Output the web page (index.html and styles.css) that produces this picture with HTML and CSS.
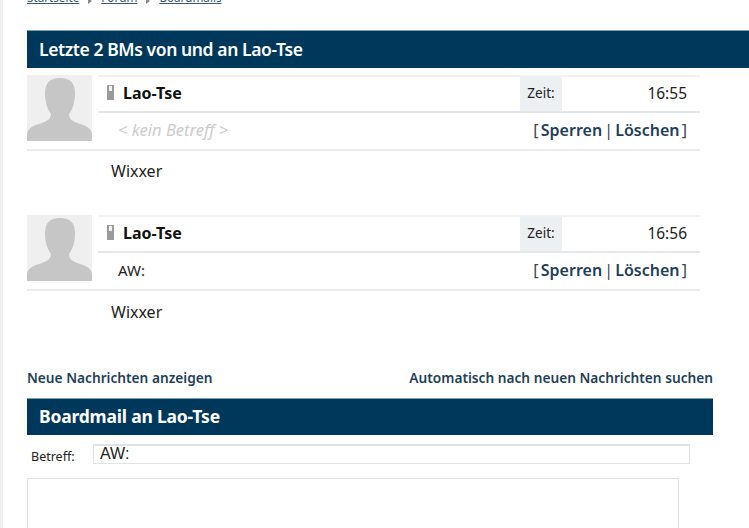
FILE: index.html
```html
<!DOCTYPE html>
<html lang="de">
<head>
    <meta charset="UTF-8">
    <meta name="viewport" content="width=device-width, initial-scale=1.0">
    <title>Boardmails</title>
    <link rel="stylesheet" href="styles.css">
</head>
<body>
    <div class="page">
        <div class="crumbs">
            <a href="#">Startseite</a>
            <span class="crumb-arrow"></span>
            <a href="#">Forum</a>
            <span class="crumb-arrow"></span>
            <a href="#">Boardmails</a>
        </div>

        <h2 class="title title-wide">Letzte 2 BMs von und an Lao-Tse</h2>

        <div class="message">
            <div class="msg-head">
                <svg class="avatar" viewBox="0 0 65 66"><rect width="65" height="66" fill="#efefef"/><path d="M0 66V60C0 54 5 51 12 49C20 46.500 24 44 24 39C20 34 18 26 18 18C18 8 23 3 33 3C43 3 48 8 48 18C48 26 46 34 42 39C42 44 45 46.500 53 49C60 51 65 54 65 60V66Z" fill="#c6c6c6"/></svg>
                <div class="msg-table">
                    <div class="row row-user">
                        <svg class="status" viewBox="0 0 7 15"><rect width="7" height="15" fill="#9b9b9b"/><rect x="2" y="1" width="3" height="5" fill="#f2f2f2"/></svg>
                        <span class="user">Lao-Tse</span>
                        <span class="time-label">Zeit:</span>
                        <span class="time">16:55</span>
                    </div>
                    <div class="row row-subject">
                        <span class="subject subject-empty">&lt; kein Betreff &gt;</span>
                        <span class="actions">[ <a href="#">Sperren</a> | <a href="#">Löschen</a> ]</span>
                    </div>
                </div>
            </div>
            <p class="msg-body">Wixxer</p>
        </div>

        <div class="message">
            <div class="msg-head">
                <svg class="avatar" viewBox="0 0 65 66"><rect width="65" height="66" fill="#efefef"/><path d="M0 66V60C0 54 5 51 12 49C20 46.500 24 44 24 39C20 34 18 26 18 18C18 8 23 3 33 3C43 3 48 8 48 18C48 26 46 34 42 39C42 44 45 46.500 53 49C60 51 65 54 65 60V66Z" fill="#c6c6c6"/></svg>
                <div class="msg-table">
                    <div class="row row-user">
                        <svg class="status" viewBox="0 0 7 15"><rect width="7" height="15" fill="#9b9b9b"/><rect x="2" y="1" width="3" height="5" fill="#f2f2f2"/></svg>
                        <span class="user">Lao-Tse</span>
                        <span class="time-label">Zeit:</span>
                        <span class="time">16:56</span>
                    </div>
                    <div class="row row-subject">
                        <span class="subject">AW:</span>
                        <span class="actions">[ <a href="#">Sperren</a> | <a href="#">Löschen</a> ]</span>
                    </div>
                </div>
            </div>
            <p class="msg-body">Wixxer</p>
        </div>

        <div class="links">
            <a href="#">Neue Nachrichten anzeigen</a>
            <a href="#">Automatisch nach neuen Nachrichten suchen</a>
        </div>

        <h2 class="title title-bold">Boardmail an Lao-Tse</h2>

        <form class="mail-form">
            <div class="subject-line">
                <label for="betreff">Betreff:</label>
                <input id="betreff" type="text" value="AW:">
            </div>
            <textarea></textarea>
        </form>
    </div>
</body>
</html>
```

FILE: styles.css
```css
html, body {
    height: 100%;
    overflow: hidden;
}
body {
    margin: 0;
    font-family: 'Noto Sans', 'Open Sans', sans-serif;
    font-size: 16px;
    color: #222;
    background-color: white;
    border-left: 3px solid #eee;
}
a {
    color: #1f3f58;
    text-decoration: none;
}
.page {
    width: 686px;
    margin-left: 24px;
}
.crumbs {
    display: flex;
    align-items: center;
    gap: 9px;
    height: 14px;
    margin-top: -10px;
    font-size: 11.700px;
}
.crumbs a {
    text-decoration: underline;
    color: #3a5a72;
}
.crumb-arrow {
    margin-top: 7px;
    border-left: 4px solid #888;
    border-top: 3px solid transparent;
    border-bottom: 3px solid transparent;
}
.title {
    margin: 0;
    height: 37px;
    line-height: 35px;
    padding-left: 12px;
    font-size: 17.500px;
    letter-spacing: -0.400px;
    font-weight: 600;
    color: white;
    background-color: #00385c;
    border-top: 1px solid #7e9db0;
    box-sizing: border-box;
}
.title-wide {
    width: 730px;
    height: 38px;
    line-height: 37px;
    margin-top: 26px;
}
.title-bold {
    font-weight: 700;
    letter-spacing: -0.200px;
}
.message {
    margin-top: 7px;
    height: 133px;
    width: 673px;
}
.msg-head {
    display: flex;
    gap: 6px;
    border-bottom: 2px solid #e9ecee;
    height: 74px;
}
.avatar {
    width: 65px;
    height: 66px;
    flex: none;
}
.msg-table {
    flex: 1;
}
.row {
    display: flex;
    align-items: center;
    box-sizing: border-box;
}
.row-user {
    height: 38px;
    border-top: 2px solid #eff1f2;
    border-bottom: 2px solid #e3e7ea;
}
.row-subject {
    height: 36px;
    padding-left: 20px;
    padding-right: 13px;
    padding-bottom: 3px;
    justify-content: space-between;
}
.status {
    width: 7px;
    height: 15px;
    margin-left: 9px;
    margin-top: -3px;
}
.user {
    margin-left: 9px;
    margin-top: -2px;
    font-weight: 700;
    color: #111;
    flex: 1;
}
.time-label {
    align-self: stretch;
    width: 42px;
    line-height: 33px;
    text-align: center;
    font-size: 13.500px;
    background-color: #edf0f2;
}
.time {
    width: 138px;
    margin-top: -2px;
    padding-right: 13px;
    box-sizing: border-box;
    text-align: right;
    font-size: 15.500px;
}
.subject {
    font-size: 15px;
}
.subject-empty {
    font-size: 16.500px;
    font-style: italic;
    color: #cccccc;
}
.actions {
    word-spacing: -2px;
    font-weight: 400;
    color: #444;
}
.actions a {
    font-weight: 600;
}
.msg-body {
    margin: 9px 0 0 84px;
}
.message + .message .msg-body {
    margin-top: 10px;
}
.links {
    display: flex;
    justify-content: space-between;
    margin-top: 20px;
    height: 20px;
    font-size: 13.700px;
    font-weight: 600;
}
.links + .title {
    margin-top: 10px;
}
.subject-line {
    display: flex;
    align-items: flex-start;
    height: 20px;
    margin-top: 9px;
}
.subject-line label {
    width: 66px;
    padding-left: 4px;
    box-sizing: border-box;
    font-size: 12.500px;
    line-height: 20px;
    margin-top: 3px;
}
.subject-line input {
    width: 597px;
    height: 20px;
    padding: 0 6px 2px;
    box-sizing: border-box;
    border: 1px solid #dfe3e6;
    border-top-width: 2px;
    font-family: 'Liberation Sans', sans-serif;
    font-size: 16px;
    color: #222;
}
textarea {
    display: block;
    width: 652px;
    height: 100px;
    margin-top: 14px;
    box-sizing: border-box;
    border: 1px solid #dfe3e6;
    resize: none;
}
```
